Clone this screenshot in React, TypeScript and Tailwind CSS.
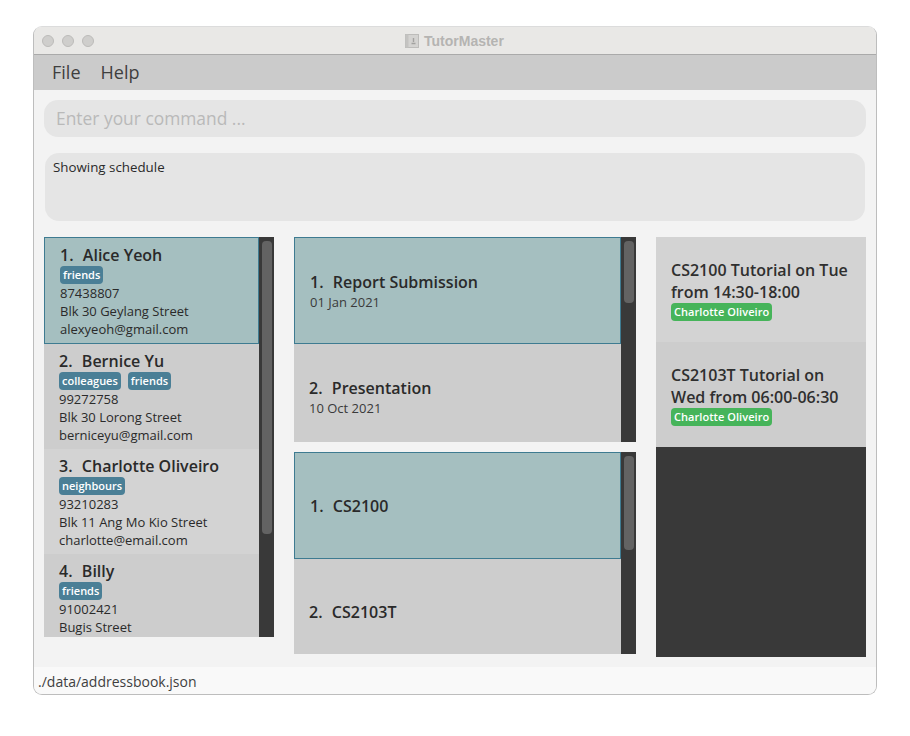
const font = "font-['Open_Sans',sans-serif]";

const persons = [
  { no: "1.", name: "Alice Yeoh", tags: ["friends"], phone: "87438807", address: "Blk 30 Geylang Street", email: "alexyeoh@gmail.com", selected: true, bg: "bg-[#a5bfc0]", h: "h-[107px]" },
  { no: "2.", name: "Bernice Yu", tags: ["colleagues", "friends"], phone: "99272758", address: "Blk 30 Lorong Street", email: "berniceyu@gmail.com", selected: false, bg: "bg-[#cdcdcd]", h: "h-[105px]" },
  { no: "3.", name: "Charlotte Oliveiro", tags: ["neighbours"], phone: "93210283", address: "Blk 11 Ang Mo Kio Street", email: "charlotte@email.com", selected: false, bg: "bg-[#d3d3d3]", h: "h-[105px]" },
  { no: "4.", name: "Billy", tags: ["friends"], phone: "91002421", address: "Bugis Street", email: "", selected: false, bg: "bg-[#cdcdcd]", h: "h-[105px]" },
];

const Scrollbar = ({ thumb }: { thumb: string }) => (
  <div className="w-[15px] shrink-0 bg-[#393939] pt-1 pl-[3px]">
    <div className={`w-[10px] rounded bg-[#636363] ${thumb}`}></div>
  </div>
);

const Title = ({ no, name }: { no: string; name: string }) => (
  <div className="text-[16px] leading-[22px] font-semibold text-[#2a2a2a] whitespace-pre">
    <span className="mr-[1px]">{no}</span>
    {"  " + name}
  </div>
);

const PersonCard = ({ p }: { p: (typeof persons)[number] }) => (
  <div className={`${p.h} shrink-0 ${p.bg} pl-[15px] pt-[6px] ${p.selected ? "border border-[#3e7b91]" : ""}`}>
    <Title no={p.no} name={p.name} />
    <div className="flex gap-[7px]">
      {p.tags.map((t) => (
        <span key={t} className="h-[18px] px-[3px] rounded-sm bg-[#4a7f96] text-white text-[11px] leading-[18px] font-semibold">
          {t}
        </span>
      ))}
    </div>
    <div className="text-[13px] leading-[18px] text-[#2a2a2a]">{p.phone}</div>
    <div className="text-[13px] leading-[18px] text-[#2a2a2a]">{p.address}</div>
    {p.email && <div className="text-[13px] leading-[18px] text-[#2a2a2a]">{p.email}</div>}
  </div>
);

const TaskCard = ({ no, name, sub, selected, h }: { no: string; name: string; sub?: string; selected?: boolean; h: string }) => (
  <div className={`${h} shrink-0 flex flex-col justify-center pl-[15px] ${selected ? "bg-[#a5bfc0] border border-[#3e7b91]" : "bg-[#cdcdcd]"}`}>
    <Title no={no} name={name} />
    {sub && <div className="text-[13px] leading-[18px] text-[#3a3a3a]">{sub}</div>}
  </div>
);

const ScheduleCard = ({ line1, line2, bg, h }: { line1: string; line2: string; bg: string; h: string }) => (
  <div className={`${h} ${bg} pl-[15px] pt-[22px]`}>
    <div className="text-[16px] leading-[22px] font-semibold text-[#2f2f2f]">{line1}</div>
    <div className="text-[16px] leading-[22px] font-semibold text-[#2f2f2f]">{line2}</div>
    <span className="inline-block h-[18px] px-[3px] rounded-sm bg-[#46b45a] text-white text-[11px] leading-[18px] font-semibold tracking-[0.05px] align-top">
      Charlotte Oliveiro
    </span>
  </div>
);

export default function App() {
  return (
    <div className={`min-h-screen bg-white pt-[26px] pl-[33px] ${font}`}>
      <div className="w-[844px] h-[669px] flex flex-col overflow-hidden rounded-[9px] border border-[#bdbdbd] border-t-[#dcdcdc] bg-[#f3f3f3]">
        <div className="h-[28px] shrink-0 relative flex items-center bg-[#e9e8e6] border-b border-[#aaaaaa] pl-[8px] gap-[8px]">
          <div className="w-3 h-3 rounded-full bg-[#cfcecc] border border-[#bcbbb9]"></div>
          <div className="w-3 h-3 rounded-full bg-[#cfcecc] border border-[#bcbbb9]"></div>
          <div className="w-3 h-3 rounded-full bg-[#cfcecc] border border-[#bcbbb9]"></div>
          <div className="absolute left-[371px] top-[5px] flex items-center gap-[5px]">
            <svg width="14" height="14" viewBox="0 0 14 14">
              <rect x="0.5" y="0.5" width="13" height="13" fill="#d4d3d1" stroke="#bdbcba" />
              <rect x="0.5" y="0.5" width="3" height="13" fill="#c4c3c1" />
              <path d="M8.5 4v4M6.5 9.5h4" stroke="#a3a2a0" strokeWidth="1.4" />
            </svg>
            <span className="text-[14px] leading-[18px] font-bold text-[#b5b4b2] font-['Liberation_Sans',sans-serif]">TutorMaster</span>
          </div>
        </div>
        <div className="h-[35px] shrink-0 flex items-center bg-[#cbcbcb] pl-[18px] gap-[20px] text-[18px] text-[#3f3f3f]">
          <span>File</span>
          <span>Help</span>
        </div>
        <div className="flex flex-col flex-1 min-h-0 px-[10px]">
          <div className="mt-[10px] h-[37px] shrink-0 rounded-[14px] bg-[#e5e5e5] flex items-center pl-[12px] text-[17.4px] text-[#b9b9b9]">
            Enter your command ...
          </div>
          <div className="mt-[16px] mx-[1px] h-[68px] shrink-0 rounded-[14px] bg-[#e5e5e5] pl-[8px] pt-[5px] text-[13.33px] leading-[18px] text-[#2a2a2a]">
            Showing schedule
          </div>
          <div className="mt-[16px] flex gap-[20px] items-start">
            <div className="w-[230px] h-[400px] flex overflow-hidden">
              <div className="flex-1 flex flex-col min-w-0">
                {persons.map((p) => (
                  <PersonCard key={p.name} p={p} />
                ))}
              </div>
              <Scrollbar thumb="h-[293px]" />
            </div>
            <div className="w-[342px] flex flex-col gap-[10px]">
              <div className="h-[205px] flex overflow-hidden">
                <div className="flex-1 flex flex-col min-w-0">
                  <TaskCard no="1." name="Report Submission" sub="01 Jan 2021" selected h="h-[107px]" />
                  <TaskCard no="2." name="Presentation" sub="10 Oct 2021" h="h-[105px]" />
                </div>
                <Scrollbar thumb="h-[62px]" />
              </div>
              <div className="h-[202px] flex overflow-hidden">
                <div className="flex-1 flex flex-col min-w-0">
                  <TaskCard no="1." name="CS2100" selected h="h-[107px]" />
                  <TaskCard no="2." name="CS2103T" h="h-[105px]" />
                </div>
                <Scrollbar thumb="h-[94px]" />
              </div>
            </div>
            <div className="w-[210px] h-[420px] bg-[#393939] flex flex-col">
              <ScheduleCard line1="CS2100 Tutorial on Tue" line2="from 14:30-18:00" bg="bg-[#d3d3d3]" h="h-[105px]" />
              <ScheduleCard line1="CS2103T Tutorial on" line2="Wed from 06:00-06:30" bg="bg-[#cdcdcd]" h="h-[105px]" />
            </div>
          </div>
        </div>
        <div className="h-[27px] shrink-0 bg-[#f9f9f9] pl-[4px] pt-[5px] text-[14px] leading-[20px] text-[#3f3f3f]">
          ./data/addressbook.json
        </div>
      </div>
    </div>
  );
}
